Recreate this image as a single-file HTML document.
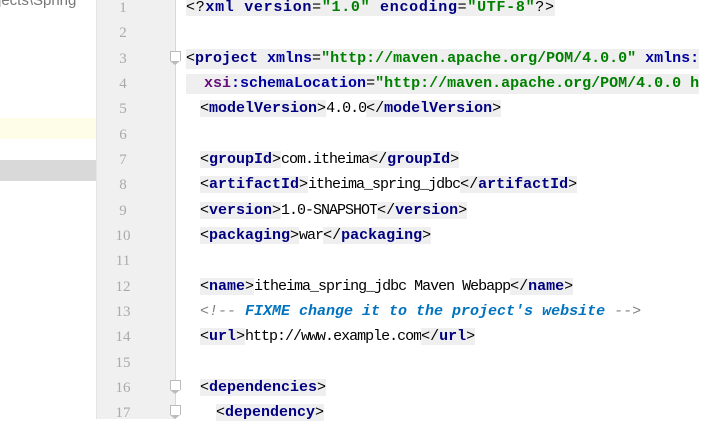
<!DOCTYPE html>
<html><head><meta charset="utf-8"><style>
body{margin:0;width:702px;height:419px;overflow:hidden;background:#fff;position:relative;font-family:"Liberation Mono","Noto Sans CJK SC",monospace;}
.left{position:absolute;left:0;top:0;width:96px;height:419px;background:#fff;border-right:1px solid #e4e4e4;}
.lt{position:absolute;left:-2px;top:-8px;font:15px "Liberation Sans",sans-serif;color:#777;}
.yel{position:absolute;left:0;top:118px;width:96px;height:21px;background:#fdfde8;}
.gry{position:absolute;left:0;top:160px;width:96px;height:21px;background:#d9d9d9;}
.gut{position:absolute;left:97px;top:0;width:78px;height:419px;background:#f0f0f0;border-right:1px solid #d8d8d8;}
.ln{position:absolute;left:97px;width:52px;text-align:center;color:#aaa;font:15px "Liberation Serif",serif;line-height:20px;}
.code{position:absolute;white-space:pre;font-size:15px;color:#000;line-height:20px;}
.t{color:#000080;font-weight:bold;background:#efefef;}
.b{color:#000;background:#efefef;font-weight:normal;}
.x{letter-spacing:-1px;}
.g{color:#008000;font-weight:bold;}
.p{color:#660e7a;font-weight:bold;}
.c{color:#808080;font-style:italic;}
.f{color:#0073bf;font-weight:bold;font-style:italic;}
.fold{position:absolute;left:170px;width:9px;height:9px;border:1px solid #bbb;border-bottom:none;background:#fff;}
.fold:after{content:"";position:absolute;left:-1px;top:9px;border-left:5.5px solid transparent;border-right:5.5px solid transparent;border-top:4px solid #bbb;}
</style></head><body>
<div class="left"><div class="lt">jects\Spring</div><div class="yel"></div><div class="gry"></div></div>
<div class="gut"></div>
<div class="ln" style="top:-2px">1</div>
<div class="ln" style="top:23px">2</div>
<div class="ln" style="top:49px">3</div>
<div class="ln" style="top:74px">4</div>
<div class="ln" style="top:99px">5</div>
<div class="ln" style="top:125px">6</div>
<div class="ln" style="top:150px">7</div>
<div class="ln" style="top:175px">8</div>
<div class="ln" style="top:201px">9</div>
<div class="ln" style="top:226px">10</div>
<div class="ln" style="top:251px">11</div>
<div class="ln" style="top:277px">12</div>
<div class="ln" style="top:302px">13</div>
<div class="ln" style="top:327px">14</div>
<div class="ln" style="top:353px">15</div>
<div class="ln" style="top:378px">16</div>
<div class="ln" style="top:403px">17</div>
<div class="fold" style="top:51px"></div>
<div class="fold" style="top:380px"></div>
<div class="fold" style="top:405px"></div>
<div class="code" style="left:186px;top:-2px;letter-spacing:0.7px"><span class="b">&lt;?</span><span class="t">xml version</span><span class="b">=</span><span class="g" style="background:#efefef">"1.0" </span><span class="t">encoding</span><span class="b">=</span><span class="g" style="background:#efefef">"UTF-8"</span><span class="b">?&gt;</span></div>
<div class="code" style="left:186px;top:49px;background:#efefef"><span class="b">&lt;</span><span class="t">project </span><span class="t" style="color:#0000a0">xmlns</span>=<span class="g">"http://maven.apache.org/POM/4.0.0" </span><span class="t" style="color:#0000a0">xmlns:</span></div>
<div class="code" style="left:186px;top:74px;background:#efefef">  <span class="p">xsi</span><span class="t" style="color:#0000a0">:schemaLocation</span>=<span class="g">"http://maven.apache.org/POM/4.0.0 h</span></div>
<div class="code" style="left:200px;top:99px"><span class="b">&lt;</span><span class="t">modelVersion</span><span class="b">&gt;</span><span class="x">4.0.0</span><span class="b">&lt;/</span><span class="t">modelVersion</span><span class="b">&gt;</span></div>
<div class="code" style="left:200px;top:150px"><span class="b">&lt;</span><span class="t">groupId</span><span class="b">&gt;</span><span class="x">com.itheima</span><span class="b">&lt;/</span><span class="t">groupId</span><span class="b">&gt;</span></div>
<div class="code" style="left:200px;top:175px"><span class="b">&lt;</span><span class="t">artifactId</span><span class="b">&gt;</span><span class="x">itheima_spring_jdbc</span><span class="b">&lt;/</span><span class="t">artifactId</span><span class="b">&gt;</span></div>
<div class="code" style="left:200px;top:201px"><span class="b">&lt;</span><span class="t">version</span><span class="b">&gt;</span><span class="x">1.0-SNAPSHOT</span><span class="b">&lt;/</span><span class="t">version</span><span class="b">&gt;</span></div>
<div class="code" style="left:200px;top:226px"><span class="b">&lt;</span><span class="t">packaging</span><span class="b">&gt;</span><span class="x">war</span><span class="b">&lt;/</span><span class="t">packaging</span><span class="b">&gt;</span></div>
<div class="code" style="left:200px;top:277px"><span class="b">&lt;</span><span class="t">name</span><span class="b">&gt;</span><span class="x">itheima_spring_jdbc Maven Webapp</span><span class="b">&lt;/</span><span class="t">name</span><span class="b">&gt;</span></div>
<div class="code" style="left:200px;top:302px"><span class="c">&lt;!-- </span><span class="f">FIXME change it to the project's website</span><span class="c"> --&gt;</span></div>
<div class="code" style="left:200px;top:327px"><span class="b">&lt;</span><span class="t">url</span><span class="b">&gt;</span><span class="x">http://www.example.com</span><span class="b">&lt;/</span><span class="t">url</span><span class="b">&gt;</span></div>
<div class="code" style="left:200px;top:378px"><span class="b">&lt;</span><span class="t">dependencies</span><span class="b">&gt;</span></div>
<div class="code" style="left:216px;top:403px"><span class="b">&lt;</span><span class="t">dependency</span><span class="b">&gt;</span></div>
</body></html>
